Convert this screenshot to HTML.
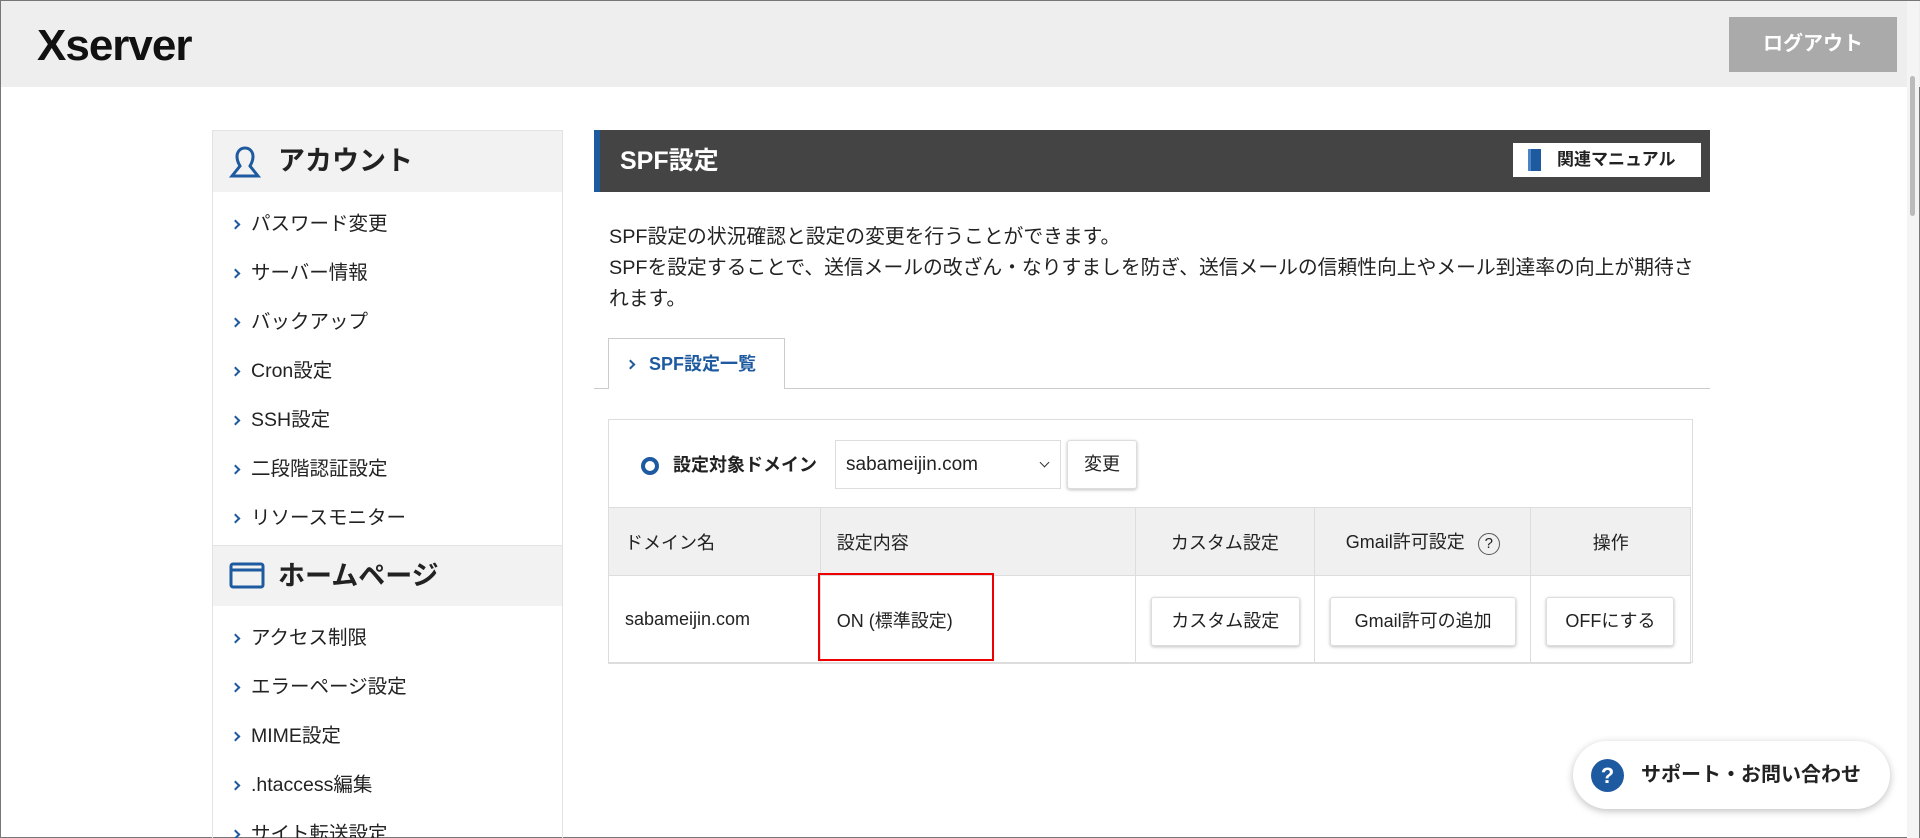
<!DOCTYPE html>
<html style="width:1920px;height:838px;overflow:hidden"><head><meta charset="utf-8"><style>
*{box-sizing:border-box;margin:0;padding:0}
body{width:1920px;height:838px;overflow:hidden;background:#fff;font-family:"Liberation Sans","Noto Sans CJK JP",sans-serif;color:#222;position:relative;border:1px solid #777}
.hdr{position:absolute;left:0;top:0;width:1920px;height:86px;background:#eee}
.logo{position:absolute;left:36px;top:20px;font-size:44px;font-weight:bold;letter-spacing:-1px;color:#111}
.logout{position:absolute;left:1728px;top:16px;width:168px;height:55px;background:#aaa;color:#fff;font-weight:bold;font-size:20px;text-align:center;line-height:55px}
.side{position:absolute;left:211px;top:129px;width:351px;height:720px;border:1px solid #e3e3e3}
.sh{height:61px;background:#f2f2f2;font-size:27px;font-weight:bold;line-height:61px;padding-left:65px;position:relative}
.sh svg{position:absolute;left:16px;top:14px}
.si{height:49px;line-height:49px;font-size:19.5px;padding-left:38px;position:relative}
.si:before{content:"";position:absolute;left:19px;top:21px;width:5px;height:5px;border-right:2.5px solid #1e5aa0;border-top:2.5px solid #1e5aa0;transform:rotate(45deg)}
.main{position:absolute;left:593px;top:129px;width:1116px}
.tb{height:62px;background:#444;border-left:6px solid #1e5aa0;color:#fff;font-size:25px;font-weight:bold;line-height:62px;padding-left:20px;position:relative}
.man{position:absolute;left:913px;top:13px;width:188px;height:34px;background:#fff;color:#222;font-size:17px;font-weight:bold;line-height:34px;padding-left:44px}
.man i{position:absolute;left:15px;top:6px;width:13px;height:22px;background:#1e5aa0;border-left:3px solid #4c83c6}
.desc{position:absolute;left:15px;top:92px;font-size:19.8px;line-height:31px;width:1110px;white-space:nowrap}
.tabline{position:absolute;left:0;top:258px;width:1116px;border-top:1px solid #ccc}
.tab{position:absolute;left:14px;top:208px;width:177px;height:51px;border:1px solid #ccc;border-bottom:none;background:#fff;color:#1e5aa0;font-weight:bold;font-size:18px;line-height:51px;padding-left:40px}
.tab:before{content:"";position:absolute;left:18px;top:22px;width:5px;height:5px;border-right:2.5px solid #1e5aa0;border-top:2.5px solid #1e5aa0;transform:rotate(45deg)}
.box{position:absolute;left:607px;top:418px;width:1085px;height:244px;border:1px solid #ddd}
.lab{position:absolute;left:32px;top:33px;font-weight:bold;font-size:18px;line-height:24px;padding-left:32px}
.lab:before{content:"";position:absolute;left:0;top:4px;width:10px;height:10px;border:4px solid #1e5aa0;border-radius:50%}
.sel{position:absolute;left:226px;top:20px;width:226px;height:49px;border:1px solid #ddd;font-size:19px;line-height:47px;padding-left:10px}
.sel:after{content:"";position:absolute;right:12px;top:18px;width:6px;height:6px;border-right:1.5px solid #333;border-bottom:1.5px solid #333;transform:rotate(45deg)}
.btn{position:absolute;background:#fff;border:1px solid #ddd;border-radius:3px;box-shadow:0 1px 3px rgba(0,0,0,.25);font-size:18px;text-align:center}
table{position:absolute;left:-1px;top:87px;border-collapse:collapse;font-size:18px}
td,th{border:1px solid #ddd;font-weight:normal}
th{height:68px;background:#f0f0f0}
td{height:88px;position:relative}
.red{position:absolute;left:817px;top:572px;width:176px;height:88px;border:2px solid #e00}
.sup{position:absolute;left:1572px;top:740px;width:317px;height:68px;border-radius:34px;background:#fff;box-shadow:0 2px 8px rgba(0,0,0,.25);font-size:20px;font-weight:bold;line-height:68px;padding-left:68px;color:#222}
.sup i{position:absolute;left:18px;top:18px;width:33px;height:33px;border-radius:50%;background:#1e5aa0;color:#fff;font-style:normal;text-align:center;line-height:33px;font-size:22px}
.sbar{position:absolute;right:0;top:0;width:12px;height:838px;background:#f4f4f4}
.sbar i{position:absolute;left:3px;top:75px;width:5px;height:140px;background:#bbb;border-radius:3px}
</style></head><body>
<div class="hdr"><div class="logo">Xserver</div><div class="logout">ログアウト</div></div>
<div class="side">
<div class="sh"><svg width="32" height="34" viewBox="0 0 32 34" fill="none" stroke="#1e5aa0" stroke-width="3"><path d="M16 3c-5 0-8 4-8 8.5S11 21 11 21L3 31h26l-8-10s3-5 3-9.5S21 3 16 3z"/></svg>アカウント</div>
<div class="si" style="margin-top:8px">パスワード変更</div><div class="si">サーバー情報</div><div class="si">バックアップ</div><div class="si">Cron設定</div><div class="si">SSH設定</div><div class="si">二段階認証設定</div><div class="si">リソースモニター</div>
<div class="sh" style="margin-top:2px;border-top:1px solid #e3e3e3"><svg width="36" height="30" viewBox="0 0 36 30" fill="none" stroke="#1e5aa0" stroke-width="3"><rect x="2" y="4" width="32" height="23" rx="2"/><path d="M2 10h32"/></svg>ホームページ</div>
<div class="si" style="margin-top:8px">アクセス制限</div><div class="si">エラーページ設定</div><div class="si">MIME設定</div><div class="si">.htaccess編集</div><div class="si">サイト転送設定</div>
</div>
<div class="main">
<div class="tb">SPF設定<div class="man"><i></i>関連マニュアル</div></div>
<div class="desc">SPF設定の状況確認と設定の変更を行うことができます。<br>SPFを設定することで、送信メールの改ざん・なりすましを防ぎ、送信メールの信頼性向上やメール到達率の向上が期待さ<br>れます。</div>
<div class="tabline"></div><div class="tab">SPF設定一覧</div>
</div>
<div class="box">
<div class="lab">設定対象ドメイン</div>
<div class="sel">sabameijin.com</div>
<div class="btn" style="left:458px;top:20px;width:70px;height:49px;line-height:47px">変更</div>
<table>
<tr><th style="width:212px;text-align:left;padding-left:16px">ドメイン名</th><th style="width:316px;text-align:left;padding-left:16px">設定内容</th><th style="width:180px">カスタム設定</th><th style="width:217px">Gmail許可設定 <span style="display:inline-block;width:22px;height:22px;border:1.5px solid #555;border-radius:50%;font-size:15px;line-height:19px;margin-left:8px">?</span></th><th style="width:160px">操作</th></tr>
<tr><td style="padding-left:16px">sabameijin.com</td><td style="padding-left:16px">ON (標準設定)</td><td><div class="btn" style="left:15px;top:21px;width:149px;height:49px;line-height:47px">カスタム設定</div></td><td><div class="btn" style="left:15px;top:21px;width:186px;height:49px;line-height:47px">Gmail許可の追加</div></td><td><div class="btn" style="left:15px;top:21px;width:128px;height:49px;line-height:47px">OFFにする</div></td></tr>
</table>
</div>
<div class="red"></div>
<div class="sup"><i>?</i>サポート・お問い合わせ</div>
<div class="sbar"><i></i></div>
</body></html>
